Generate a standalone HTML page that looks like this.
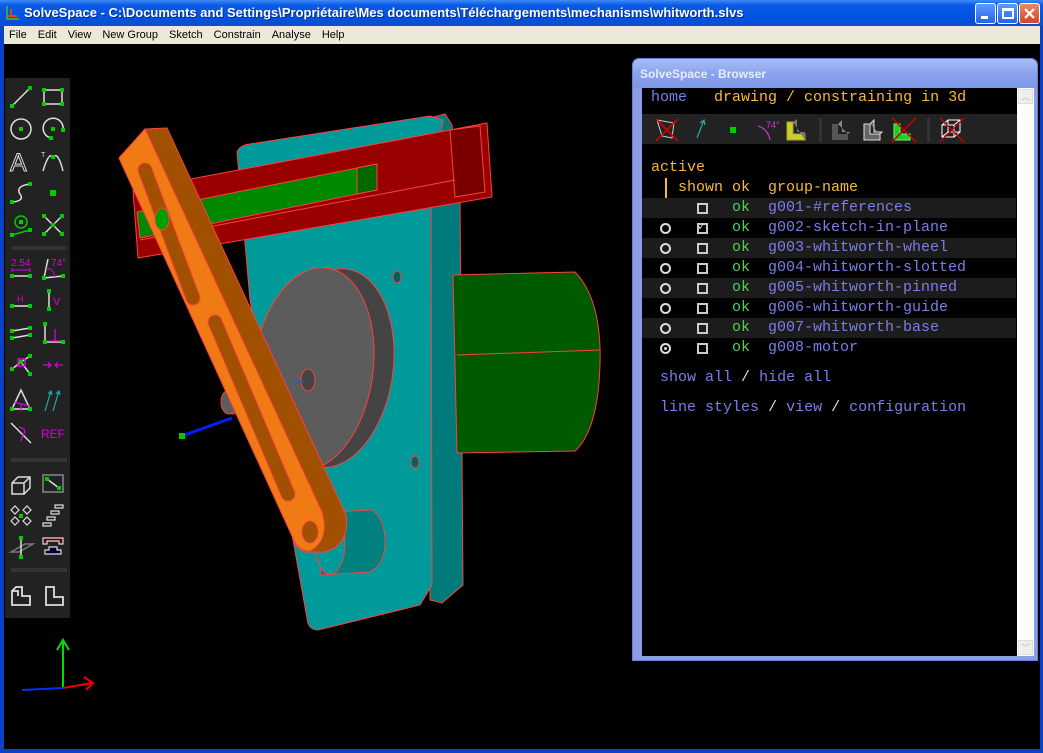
<!DOCTYPE html>
<html><head><meta charset="utf-8"><style>
*{margin:0;padding:0;box-sizing:border-box}
body{width:1043px;height:753px;overflow:hidden;background:#0842c8;position:relative;font-family:"Liberation Sans",sans-serif}
#title{position:absolute;left:0;top:0;width:1043px;height:26px;background:linear-gradient(#3d8cf5,#0a5ae6 20%,#0054e3 60%,#0a4fd0);color:#fff;font-weight:bold;font-size:13px;line-height:26px;padding-left:24px;text-shadow:1px 1px #0a2a80}
.btn{position:absolute;top:3px;width:21px;height:21px;border:1px solid #fff;border-radius:3px;background:linear-gradient(#5b9bff,#2463e8)}
#menu{position:absolute;left:4px;top:26px;width:1036px;height:18px;background:#ece9d8;font-size:11px;line-height:18px;color:#000}
#menu span{margin-left:5px;margin-right:6px}
#canvas{position:absolute;left:4px;top:44px;width:1036px;height:705px;background:#000}
#bw{position:absolute;left:632px;top:58px;width:406px;height:603px;background:#8a9ee6;border-radius:7px 7px 0 0;border:1px solid #6a80d8}
#bwt{position:absolute;left:0;top:0;width:100%;height:29px;background:linear-gradient(#a9bdf5,#8aa3ee 50%,#7d97e8);border-radius:7px 7px 0 0;color:#e8eefc;font-weight:bold;font-size:12px;line-height:30px;padding-left:7px}
#bc{position:absolute;left:9px;top:29px;width:375px;height:568px;background:#000;font-family:"Liberation Mono",monospace;font-size:15px;color:#f8b838}
#sb{position:absolute;left:384px;top:29px;width:17px;height:568px;background:#fdfdfa}
.r{position:absolute;left:0;height:20px;line-height:20px;white-space:pre;width:374px}
.sh{background:#1c1c1c}
.b{color:#7d7de8}.g{color:#50d050}.w{color:#ddd}
.cb{position:absolute;width:11px;height:11px;border:2px solid #ccc;top:5px;left:55px}
.rd{position:absolute;width:11px;height:11px;border:2px solid #ddd;border-radius:50%;top:5px;left:18px}
#tb{position:absolute;left:5px;top:78px;width:65px;height:540px;background:#222}
</style></head><body>
<div id="title">SolveSpace - C:\Documents and Settings\Propriétaire\Mes documents\Téléchargements\mechanisms\whitworth.slvs</div>
<svg style="position:absolute;left:4px;top:5px" width="16" height="16"><path d="M3 1v13h12" stroke="#3a3" stroke-width="2" fill="none"/><path d="M7 4v7M4 11h9" stroke="#f33" stroke-width="2"/></svg>
<div class="btn" style="left:975px"><div style="position:absolute;left:5px;top:12px;width:7px;height:3px;background:#fff"></div></div>
<div class="btn" style="left:997px"><div style="position:absolute;left:4px;top:4px;width:12px;height:11px;border:2px solid #fff;border-top-width:3px"></div></div>
<div class="btn" style="left:1019px;background:linear-gradient(#e88a6a,#d2461e)"><svg width="19" height="19"><path d="M5 5l9 9M14 5l-9 9" stroke="#fff" stroke-width="2.2"/></svg></div>
<div id="menu"><span>File</span><span>Edit</span><span>View</span><span>New Group</span><span>Sketch</span><span>Constrain</span><span>Analyse</span><span>Help</span></div>
<div id="canvas"></div>

<svg style="position:absolute;left:0;top:0" width="1043" height="753">
<g stroke="#ff4040" stroke-width="1">
<polygon points="430,118 445,114 452,125 460,200 463,585 442,603 430,600" fill="#007a7a"/>
<path d="M237,152 Q240,145 250,144 L430,116 L443,120 L431,207 L432,585 L420,605 L318,630 Q308,630 307,618 L250,300 Z" fill="#009a9a"/>
<path d="M453,275 L575,272 Q602,300 600,365 Q598,430 575,451 L457,453 Z" fill="#005a00"/>
<line x1="457" y1="355" x2="600" y2="350"/>
<ellipse cx="397" cy="277" rx="4" ry="6" fill="#006060"/>
<ellipse cx="415" cy="462" rx="4" ry="6" fill="#006060"/>
<path d="M330,512 L372,510 Q386,520 385,545 Q384,565 370,572 L320,575 Z" fill="#00807f"/>
<ellipse cx="330" cy="543" rx="15" ry="31" fill="#009a9a"/>
<ellipse cx="333" cy="368" rx="60" ry="100" fill="#444" transform="rotate(8 333 368)"/>
<ellipse cx="313" cy="369" rx="60" ry="102" fill="#5c5c5c" transform="rotate(8 313 369)"/>
<ellipse cx="308" cy="380" rx="7" ry="11" fill="#444"/>
<polygon points="133,190 487,123 492,197 138,258" fill="#990000"/>
<polygon points="137,212 377,164 377,190 140,238" fill="#008800"/>
<polygon points="357,168 377,164 377,190 357,194" fill="#006800"/>
<polygon points="450,130 480,126 485,192 455,197" fill="#7a0000"/>
<line x1="140" y1="240" x2="455" y2="180"/>
<path d="M230,390 L252,388 L255,412 L232,414 Z" fill="#444"/>
<ellipse cx="229" cy="402" rx="8" ry="12" fill="#5c5c5c"/>
<!-- arm -->
<path d="M119,158 L145,129 L167,128 L346,515 Q350,545 325,552 L305,552 Q295,548 293,538 Z" fill="#a05000"/>
<path d="M119,158 L145,129 L322,512 Q330,540 310,551 Q298,551 293,538 Z" fill="#f07b14"/>
</g>
<g stroke-linecap="round">
<line x1="145" y1="170" x2="193" y2="298" stroke="#ff4040" stroke-width="15"/>
<line x1="145" y1="170" x2="193" y2="298" stroke="#a05000" stroke-width="13"/>
<line x1="215" y1="322" x2="288" y2="494" stroke="#ff4040" stroke-width="15"/>
<line x1="215" y1="322" x2="288" y2="494" stroke="#a05000" stroke-width="13"/>
</g>
<ellipse cx="310" cy="532" rx="8" ry="11" fill="#a05000" stroke="#ff4040"/>
<ellipse cx="162" cy="219" rx="7" ry="11" fill="#00a000" stroke="#ff4040"/>
<line x1="182" y1="436" x2="232" y2="418" stroke="#0020ff" stroke-width="3"/>
<rect x="179" y="433" width="6" height="6" fill="#0c0"/>
<line x1="294" y1="383" x2="305" y2="381" stroke="#2060a0" stroke-width="1.5"/>
<line x1="63" y1="688" x2="63" y2="642" stroke="#00dd00" stroke-width="2"/><path d="M57,650 L63,640 L69,650" stroke="#00dd00" stroke-width="2" fill="none"/>
<line x1="63" y1="688" x2="92" y2="683" stroke="#e00" stroke-width="2"/><path d="M84,677 L93,683 L86,690" stroke="#e00" stroke-width="2" fill="none"/>
<line x1="63" y1="688" x2="22" y2="690" stroke="#0030ff" stroke-width="2"/>
</svg>

<div id="tb"></div>
<svg style="position:absolute;left:5px;top:78px" width="65" height="540" fill="none" stroke="#ddd" stroke-width="1.5" font-family="Liberation Sans">
<rect x="6" y="168" width="56" height="4" fill="#333" stroke="none"/>
<rect x="6" y="380" width="56" height="4" fill="#333" stroke="none"/>
<rect x="6" y="490" width="56" height="4" fill="#333" stroke="none"/>
<defs><rect id="p" x="-2" y="-2" width="4" height="4" fill="#0c0" stroke="none"/></defs>
<!-- row1 y=7 -->
<g transform="translate(4,7)"><line x1="3" y1="21" x2="21" y2="3"/><use href="#p" x="3" y="21"/><use href="#p" x="21" y="3"/></g>
<g transform="translate(36,7)"><rect x="3" y="5" width="18" height="14"/><use href="#p" x="3" y="5"/><use href="#p" x="21" y="5"/><use href="#p" x="3" y="19"/><use href="#p" x="21" y="19"/></g>
<!-- row2 y=39 -->
<g transform="translate(4,39)"><circle cx="12" cy="12" r="10"/><use href="#p" x="12" y="12"/></g>
<g transform="translate(36,39)"><path d="M10,21 A10 10 0 1 1 22,13"/><use href="#p" x="12" y="12"/><use href="#p" x="22" y="13"/><use href="#p" x="10" y="21"/></g>
<!-- row3 y=71 -->
<g transform="translate(4,71)"><text x="1" y="22" font-size="25" stroke-width="1">A</text></g>
<g transform="translate(36,71)"><path d="M2,22 Q8,2 12,8 Q17,2 22,22"/><use href="#p" x="12" y="8"/><text x="0" y="8" font-size="7" fill="#ddd" stroke="none">T</text></g>
<!-- row4 y=103 -->
<g transform="translate(4,103)"><path d="M3,21 Q16,20 11,13 Q6,5 21,3"/><use href="#p" x="3" y="21"/><use href="#p" x="21" y="3"/></g>
<g transform="translate(36,103)"><rect x="9" y="9" width="6" height="6" fill="#0c0" stroke="none"/></g>
<!-- row5 y=135 -->
<g transform="translate(4,135)"><circle cx="12" cy="9" r="6" stroke="#0c0"/><use href="#p" x="12" y="9"/><line x1="3" y1="22" x2="21" y2="17" stroke="#0c0"/><use href="#p" x="3" y="22"/><use href="#p" x="21" y="17"/></g>
<g transform="translate(36,135)"><path d="M3,3 L21,21 M21,3 L3,21"/><use href="#p" x="3" y="3"/><use href="#p" x="21" y="3"/><use href="#p" x="3" y="21"/><use href="#p" x="21" y="21"/><use href="#p" x="12" y="12"/></g>
<!-- row6 y=178 -->
<g transform="translate(4,178)"><text x="2" y="10" font-size="10" fill="#d0d" stroke="none">2.54</text><path d="M3,14 H21 M3,12 V16 M21,12 V16" stroke="#d0d" stroke-width="1"/><line x1="3" y1="20" x2="21" y2="20"/><use href="#p" x="3" y="20"/><use href="#p" x="21" y="20"/></g>
<g transform="translate(36,178)"><path d="M3,22 L7,3 M3,22 L22,20"/><path d="M5,12 Q13,13 14,21" stroke="#d0d" stroke-width="1"/><text x="10" y="10" font-size="10" fill="#d0d" stroke="none">74°</text><use href="#p" x="3" y="22"/><use href="#p" x="22" y="20"/></g>
<!-- row7 y=210 -->
<g transform="translate(4,210)"><text x="8" y="14" font-size="9" fill="#d0d" stroke="none">H</text><line x1="3" y1="18" x2="21" y2="18"/><use href="#p" x="3" y="18"/><use href="#p" x="21" y="18"/></g>
<g transform="translate(36,210)"><line x1="8" y1="3" x2="8" y2="21"/><use href="#p" x="8" y="3"/><use href="#p" x="8" y="21"/><text x="12" y="17" font-size="11" fill="#d0d" stroke="none">V</text></g>
<!-- row8 y=243 -->
<g transform="translate(4,243)"><path d="M3,10 L21,7 M3,17 L21,14"/><use href="#p" x="3" y="10"/><use href="#p" x="21" y="7"/><use href="#p" x="3" y="17"/><use href="#p" x="21" y="14"/></g>
<g transform="translate(36,243)"><path d="M4,3 V21 H22"/><path d="M14,8 V20 M8,20 H20" stroke="#d0d" stroke-width="1.2"/><use href="#p" x="4" y="3"/><use href="#p" x="4" y="21"/><use href="#p" x="22" y="21"/></g>
<!-- row9 y=275 -->
<g transform="translate(4,275)"><path d="M3,16 L12,9 L21,21 M12,9 L21,3"/><rect x="9" y="6" width="7" height="7" stroke="#d0d"/><use href="#p" x="3" y="16"/><use href="#p" x="21" y="3"/><use href="#p" x="21" y="21"/><use href="#p" x="12" y="9"/></g>
<g transform="translate(36,275)"><path d="M2,12 H10 M7,9 L10,12 L7,15 M22,12 H14 M17,9 L14,12 L17,15" stroke="#d0d" stroke-width="1.2"/></g>
<!-- row10 y=309 -->
<g transform="translate(4,309)"><path d="M3,22 L12,3 L21,22 Z"/><path d="M5,15 L20,19 M12,17 V24" stroke="#d0d" stroke-width="1.2"/><use href="#p" x="3" y="22"/><use href="#p" x="21" y="22"/></g>
<g transform="translate(36,309)"><path d="M4,24 L10,4 M7,7 L10,4 L11,8 M12,24 L18,4 M15,7 L18,4 L19,8" stroke="#2aa" stroke-width="1.2"/></g>
<!-- row11 y=343 -->
<g transform="translate(4,343)"><path d="M2,2 L22,22"/><path d="M10,6 Q19,8 14,14 L12,20" stroke="#d0d" stroke-width="1.2"/></g>
<g transform="translate(36,343)"><text x="0" y="17" font-size="12" fill="#d0d" stroke="none">REF</text></g>
<!-- row12 y=393 -->
<g transform="translate(4,393)"><path d="M3,12 L9,6 H21 V17 L15,23 H3 Z M3,12 H15 V23 M15,12 L21,6"/></g>
<g transform="translate(36,393)"><rect x="2" y="4" width="20" height="17" stroke="#888"/><path d="M6,8 L18,17"/><use href="#p" x="6" y="8"/><use href="#p" x="18" y="17"/></g>
<!-- row13 y=425 -->
<g transform="translate(4,425)" stroke-width="1.2"><path d="M2,7 l4,-4 l4,4 l-4,4 z M14,7 l4,-4 l4,4 l-4,4 z M2,18 l4,-4 l4,4 l-4,4 z M14,18 l4,-4 l4,4 l-4,4 z"/><use href="#p" x="12" y="13"/></g>
<g transform="translate(36,425)" stroke-width="1.2"><path d="M14,2 h8 v3 h-8z M10,8 h8 v3 h-8z M6,14 h8 v3 h-8z M2,20 h8 v3 h-8z"/></g>
<!-- row14 y=457 -->
<g transform="translate(4,457)"><path d="M2,17 L16,9 L24,9 L10,17 Z" stroke="#777"/><line x1="12" y1="3" x2="12" y2="22"/><use href="#p" x="12" y="3"/><use href="#p" x="12" y="22"/></g>
<g transform="translate(36,457)" stroke-width="1.2"><path d="M2,3 h20 v6 h-4 v-3 h-12 v3 h-4 z" fill="#500"/><path d="M4,19 h16 v-4 h-4 v-3 h-8 v3 h-4 z" fill="#003"/></g>
<!-- row15 y=505 -->
<g transform="translate(4,505)" stroke-width="1.8"><path d="M3,22 V8 L7,4 H13 V13 H21 V22 Z M3,8 H9 V13 M13,13 V4"/></g>
<g transform="translate(36,505)" stroke-width="1.8"><path d="M5,4 V22 H22 V14 H13 V4 Z"/></g>
</svg>

<div id="bw">
<div id="bwt">SolveSpace - Browser</div>
<div id="bc">
<div class="r" style="top:0"> <span class="b">home</span>   drawing / constraining in 3d</div>
<div style="position:absolute;left:0;top:26px;width:375px;height:30px;background:#222"></div>
<svg style="position:absolute;left:0;top:26px" width="375" height="30" fill="none">
<path d="M15,6 L32,9 L30,24 L20,22 Z" stroke="#ccc"/><path d="M14,5 L36,27 M36,5 L14,27" stroke="#d00" stroke-width="1.5"/>
<path d="M55,24 L62,6 M58,9 L62,6 L63,11" stroke="#2aa" stroke-width="1.2"/>
<rect x="88" y="13" width="6" height="6" fill="#0c0"/>
<path d="M116,12 Q126,15 128,26" stroke="#c3c" stroke-width="1.2"/><text x="124" y="14" font-size="9" fill="#d3d" font-family="Liberation Sans">74°</text>
<path d="M145,8 h6 v12 h12 v6 h-18 z" fill="#cc3" stroke="#aa2"/><path d="M151,8 l4,-3 v13 l8,0 v8" fill="#777"/>
<rect x="177" y="4" width="3" height="24" fill="#333"/>
<path d="M190,10 h6 v10 h10 v6 h-16 z" fill="#555"/><path d="M196,10 l4,-4 v12 h8 l-2,2" fill="#888"/>
<path d="M222,10 h6 v10 h10 v6 h-16 z M228,10 l4,-4 v12 h8 l-2,2" stroke="#ddd" fill="#666"/>
<path d="M252,10 h6 v10 h10 v6 h-16 z" fill="#2c2" stroke="#6f6"/><path d="M250,4 L274,28 M274,4 L250,28" stroke="#c00" stroke-width="1.5"/>
<rect x="285" y="4" width="3" height="24" fill="#333"/>
<path d="M300,11 h12 v12 h-12 z M306,6 h12 v12 h-12 z M300,11 l6,-5 M312,11 l6,-5 M312,23 l6,-5 M300,23 l6,-5" stroke="#fff"/><path d="M298,4 L322,28 M322,4 L298,28" stroke="#c00" stroke-width="1.3"/>
</svg>
<div class="r" style="top:70px"> active</div>
<div style="position:absolute;left:23px;top:90px;width:2px;height:38px;background:#f8b838"></div>
<div class="r" style="top:90px">    shown ok  group-name</div>
<div class="r sh" style="top:110px"><span class="cb"></span><span style="position:absolute;left:90px" class="g">ok</span><span style="position:absolute;left:126px" class="b">g001-#references</span></div>
<div class="r" style="top:130px"><span class="rd"></span><span class="cb"></span><span style="position:absolute;left:56px;top:-1px;font-size:12px" class="w">✓</span><span style="position:absolute;left:90px" class="g">ok</span><span style="position:absolute;left:126px" class="b">g002-sketch-in-plane</span></div>
<div class="r sh" style="top:150px"><span class="rd"></span><span class="cb"></span><span style="position:absolute;left:90px" class="g">ok</span><span style="position:absolute;left:126px" class="b">g003-whitworth-wheel</span></div>
<div class="r" style="top:170px"><span class="rd"></span><span class="cb"></span><span style="position:absolute;left:90px" class="g">ok</span><span style="position:absolute;left:126px" class="b">g004-whitworth-slotted</span></div>
<div class="r sh" style="top:190px"><span class="rd"></span><span class="cb"></span><span style="position:absolute;left:90px" class="g">ok</span><span style="position:absolute;left:126px" class="b">g005-whitworth-pinned</span></div>
<div class="r" style="top:210px"><span class="rd"></span><span class="cb"></span><span style="position:absolute;left:90px" class="g">ok</span><span style="position:absolute;left:126px" class="b">g006-whitworth-guide</span></div>
<div class="r sh" style="top:230px"><span class="rd"></span><span class="cb"></span><span style="position:absolute;left:90px" class="g">ok</span><span style="position:absolute;left:126px" class="b">g007-whitworth-base</span></div>
<div class="r" style="top:250px"><span class="rd"><span style="position:absolute;left:2px;top:2px;width:3px;height:3px;background:#ddd;border-radius:50%"></span></span><span class="cb"></span><span style="position:absolute;left:90px" class="g">ok</span><span style="position:absolute;left:126px" class="b">g008-motor</span></div>
<div class="r" style="top:280px">  <span class="b">show all</span> <span class="w">/</span> <span class="b">hide all</span></div>
<div class="r" style="top:310px">  <span class="b">line styles</span> <span class="w">/</span> <span class="b">view</span> <span class="w">/</span> <span class="b">configuration</span></div>
</div>
<div id="sb"><div style="position:absolute;left:1px;top:1px;width:15px;height:15px;border:1px solid #ddd;background:#f0f0ea;color:#bbb;font-size:9px;text-align:center;line-height:14px">︿</div><div style="position:absolute;left:1px;bottom:1px;width:15px;height:15px;border:1px solid #ddd;background:#f0f0ea;color:#bbb;font-size:9px;text-align:center;line-height:14px">﹀</div></div>
</div>
</body></html>
